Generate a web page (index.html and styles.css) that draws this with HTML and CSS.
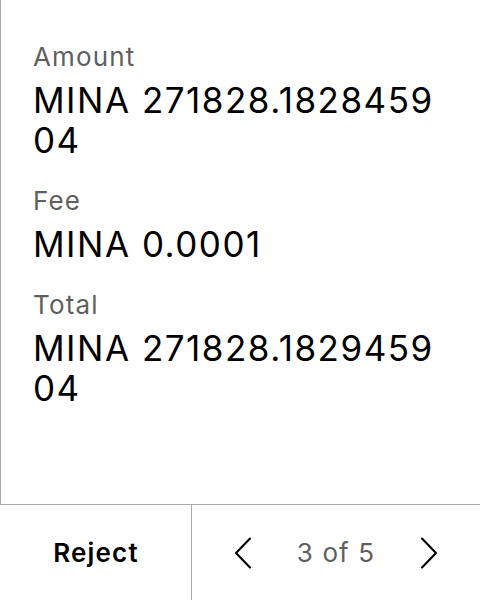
FILE: index.html
```html
<!DOCTYPE html>
<html>
<head>
<meta charset="utf-8">
<link rel="stylesheet" href="styles.css">
</head>
<body>
<div class="screen">
  <main class="details">
    <section class="field">
      <div class="label">Amount</div>
      <div class="value">MINA 271828.1828459<br>04</div>
    </section>
    <section class="field">
      <div class="label">Fee</div>
      <div class="value">MINA 0.0001</div>
    </section>
    <section class="field">
      <div class="label">Total</div>
      <div class="value">MINA 271828.1829459<br>04</div>
    </section>
  </main>
  <footer class="actions">
    <button class="reject">Reject</button>
    <div class="pager">
      <svg class="chev" width="18" height="32" viewBox="0 0 18 32"><path d="M16 1.5 L2 16 L16 30.5" fill="none" stroke="#000" stroke-width="2.1" stroke-linecap="round" stroke-linejoin="round"/></svg>
      <span class="count">3 of 5</span>
      <svg class="chev" width="18" height="32" viewBox="0 0 18 32"><path d="M2 1.5 L16 16 L2 30.5" fill="none" stroke="#000" stroke-width="2.1" stroke-linecap="round" stroke-linejoin="round"/></svg>
    </div>
  </footer>
</div>
</body>
</html>
```
FILE: styles.css
```css
html, body {
  margin: 0;
  padding: 0;
  background: #fff;
}
body {
  font-family: Inter, "Noto Sans", sans-serif;
  color: #000;
}
.screen {
  width: 480px;
  height: 600px;
  display: flex;
  flex-direction: column;
}
.details {
  flex: 1;
  border-left: 1px solid #aaaaaa;
  padding: 41px 0 0 32px;
  display: flex;
  flex-direction: column;
  gap: 25px;
}
.field {
  display: flex;
  flex-direction: column;
  gap: 7px;
}
.label {
  font-size: 26px;
  line-height: 32px;
  letter-spacing: 1.15px;
  color: #5f5f5f;
}
.value {
  font-size: 35px;
  line-height: 40px;
  letter-spacing: 1.5px;
  color: #000;
}
.actions {
  height: 95px;
  border-top: 1px solid #aaaaaa;
  display: flex;
}
.reject {
  width: 192px;
  border: none;
  border-right: 1px solid #aaaaaa;
  background: #fff;
  font-family: Inter, "Noto Sans", sans-serif;
  font-size: 26px;
  font-weight: 600;
  letter-spacing: 1.2px;
  color: #000;
  padding: 0 0 0 1px;
}
.pager {
  flex: 1;
  display: flex;
  align-items: center;
  justify-content: center;
  gap: 45px;
}
.count {
  font-size: 26px;
  letter-spacing: 1.1px;
  color: #5f5f5f;
}
.chev {
  display: block;
}
```
